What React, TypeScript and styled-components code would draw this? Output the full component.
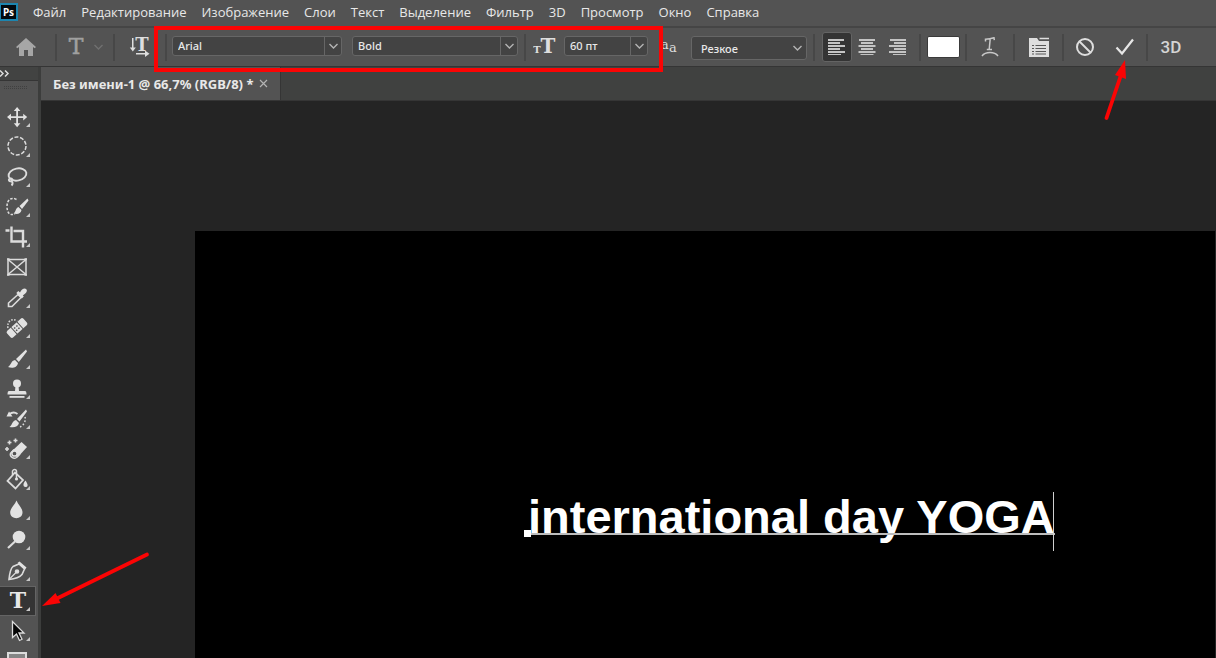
import React from "react";
import styled, { createGlobalStyle } from "styled-components";

const Global = createGlobalStyle`
  *, *::before, *::after { box-sizing: border-box; }
  body { margin: 0; background: #242424; color: #e8e8e8; font-family: "Noto Sans", "Open Sans", sans-serif; }
  button, input, select { font: inherit; color: inherit; }
  svg { display: block; flex: none; }
`;

const Page = styled.div`
  position: relative;
  display: flex;
  flex-direction: column;
  height: 100vh;
  overflow: hidden;
`;

const MenuBar = styled.nav`
  display: flex;
  align-items: center;
  gap: 15px;
  height: 26px;
  flex: none;
  padding-bottom: 2px;
  background: #535353;
`;

const AppLogo = styled.div`
  display: flex;
  align-items: center;
  justify-content: center;
  width: 18px;
  height: 18px;
  background: #020a10;
  border: 2px solid #1d86b0;
  border-left-width: 1px;
  font-size: 10px;
  font-weight: 700;
  line-height: 12px;
  color: #fff;
`;

const MenuItem = styled.button`
  padding: 0;
  border: 0;
  background: none;
  font-family: "Open Sans", "Noto Sans", sans-serif;
  font-size: 13px;
  line-height: 20px;
  white-space: nowrap;
`;

const OptionsBar = styled.div`
  display: flex;
  align-items: center;
  height: 41px;
  flex: none;
  background: #535353;
  border-top: 2px solid #454545;
  border-bottom: 1px solid #353535;
`;

const Cell = styled.div<{ $w: number }>`
  display: flex;
  align-items: center;
  justify-content: center;
  width: ${(p) => p.$w}px;
  flex: none;
`;

const Divider = styled.div`
  width: 2px;
  height: 27px;
  flex: none;
  background: #474747;
`;

const IconButton = styled.button<{ $w?: number; $active?: boolean }>`
  display: flex;
  align-items: center;
  justify-content: center;
  width: ${(p) => p.$w ?? 30}px;
  height: 30px;
  flex: none;
  padding: 0;
  border: 1px solid ${(p) => (p.$active ? "#646464" : "transparent")};
  border-radius: 3px;
  background: ${(p) => (p.$active ? "#343434" : "none")};
`;

const Combo = styled.div<{ $w: number }>`
  display: flex;
  width: ${(p) => p.$w}px;
  height: 20px;
  flex: none;
  margin-bottom: 2px;
  border: 1px solid #666;
  border-radius: 3px;
  background: #434343;
`;

const ComboInput = styled.input`
  flex: 1;
  min-width: 0;
  padding: 0 5px;
  border: 0;
  background: none;
  font-size: 11px;
  font-weight: 500;
  line-height: 18px;
`;

const ComboArrow = styled.button`
  display: flex;
  align-items: center;
  justify-content: center;
  width: 17px;
  padding: 0;
  border: 0;
  border-left: 1px solid #666;
  background: none;
`;

const SelectBox = styled.div`
  display: grid;
  align-items: center;
  width: 116px;
  height: 24px;
  flex: none;
  margin: 2px 6px 0 0;
  border: 1px solid #666;
  border-radius: 3px;
  background: #434343;
  & > * { grid-area: 1 / 1; }
  & > svg { justify-self: end; margin-right: 3px; pointer-events: none; }
`;

const Select = styled.select`
  width: 100%;
  height: 22px;
  padding: 0 20px 0 9px;
  appearance: none;
  border: 0;
  background: none;
  font-size: 11px;
  font-weight: 500;
`;

const Swatch = styled.button`
  width: 33px;
  height: 22px;
  flex: none;
  margin: 0 5px 0 6px;
  padding: 0;
  border: 1px solid #3a3a3a;
  border-radius: 2px;
  background: #fff;
`;

const Workspace = styled.div`
  display: flex;
  flex: 1;
  min-height: 0;
`;

const ToolPanel = styled.aside`
  width: 41px;
  flex: none;
  overflow: hidden;
  background: #535353;
  border-right: 3px solid #3c3d3c;
`;

const PanelHeader = styled.button`
  display: flex;
  align-items: center;
  width: 100%;
  height: 14px;
  padding: 0;
  border: 0;
  border-bottom: 1px solid #353535;
  background: #424342;
`;

const Grip = styled.div`
  width: 23px;
  height: 3px;
  margin: 5px 0 13px 4px;
  border-top: 1px dotted #404040;
  border-bottom: 1px dotted #404040;
`;

const ToolGroups = styled.div`
  display: flex;
  flex-direction: column;
  gap: 1px;
`;

const ToolGroup = styled.div`
  display: flex;
  flex-direction: column;
`;

const ToolButton = styled.button<{ $active: boolean }>`
  display: flex;
  align-items: center;
  width: 36px;
  height: 30px;
  padding: 0 0 0 5px;
  border: 1px solid ${(p) => (p.$active ? "#646464" : "transparent")};
  border-left: 0;
  background: ${(p) => (p.$active ? "#343434" : "none")};
`;

const Documents = styled.main`
  display: flex;
  flex-direction: column;
  flex: 1;
  min-width: 0;
`;

const TabStrip = styled.div`
  display: flex;
  height: 34px;
  flex: none;
  background: #404140;
  border-bottom: 1px solid #353535;
`;

const Tab = styled.div`
  display: flex;
  align-items: center;
  gap: 6px;
  padding: 0 12px;
  border-right: 1px solid #353535;
  background: #535353;
  font-size: 13px;
  font-weight: 700;
  white-space: nowrap;
`;

const CloseButton = styled.button`
  padding: 0;
  border: 0;
  background: none;
`;

const Stage = styled.div`
  display: flex;
  flex: 1;
  min-height: 0;
  padding: 130px 1px 0 154px;
  background: #242424;
`;

const Artboard = styled.div`
  flex: 1;
  padding: 261px 0 0 333px;
  background: #000;
`;

const TextLayer = styled.div`
  position: relative;
  width: max-content;
  color: #fff;
  font: 700 47px/50px "Liberation Sans", Arial, sans-serif;
  white-space: nowrap;
`;

const Baseline = styled.div`
  position: absolute;
  left: 0;
  right: 0;
  top: 41px;
  height: 2px;
  background: #bdbdbd;
`;

const Anchor = styled.div`
  position: absolute;
  left: -4px;
  top: 38px;
  width: 7px;
  height: 7px;
  background: #fff;
`;

const Caret = styled.div`
  position: absolute;
  right: 1px;
  top: 0;
  width: 1px;
  height: 59px;
  background: #d0d0d0;
`;

const Highlight = styled.div`
  position: absolute;
  left: 154px;
  top: 26px;
  width: 509px;
  height: 46px;
  border: 4px solid #fb0404;
  pointer-events: none;
`;

const Arrows = styled.svg`
  position: absolute;
  left: 0;
  top: 0;
  pointer-events: none;
`;

const Chevron = ({ color = "#b4b4b4" }: { color?: string }) => (
  <svg width="11" height="8" viewBox="0 0 11 8" fill="none" stroke={color} strokeWidth="1.4">
    <path d="M1.5 2l4 4 4-4" />
  </svg>
);

const slab = { fontFamily: "DejaVu Serif, serif" };

const HomeIcon = () => (
  <svg width="20" height="18" viewBox="0 0 20 18" fill="#a6a6a6">
    <path d="M10 0L20 9l-1.300 1.300-1.700-1.300v9h-5v-6H8v6H3V9l-1.700 1.300L0 9z" />
  </svg>
);

const TypePresetIcon = () => (
  <svg width="20" height="28" viewBox="0 0 20 28" fill="#a0a0a0" stroke="#a0a0a0" strokeWidth=".5">
    <text x="10" y="21" textAnchor="middle" fontSize="22" style={slab}>T</text>
  </svg>
);

const OrientationIcon = () => (
  <svg width="22" height="28" viewBox="0 0 22 28" fill="#dedede">
    <text x="13" y="18" textAnchor="middle" fontSize="18" fontWeight="700" style={slab}>T</text>
    <path d="M3 5h1.500v12H3z" />
    <path d="M.8 14.500h6l-3 4z" />
    <path d="M7 20h10v1.500H7z" />
    <path d="M16 17.500l4.500 3.200-4.500 3.200z" />
  </svg>
);

const FontSizeIcon = () => (
  <svg width="24" height="28" viewBox="0 0 24 28" fill="#dedede">
    <text x="4" y="20" textAnchor="middle" fontSize="10" fontWeight="700" style={slab}>T</text>
    <text x="15" y="20" textAnchor="middle" fontSize="20" fontWeight="700" style={slab}>T</text>
  </svg>
);

const AntiAliasIcon = () => (
  <svg width="17" height="24" viewBox="0 0 17 24" fill="#dedede">
    <text x="0" y="14" fontSize="13" style={slab}>a</text>
    <text x="8" y="17" fontSize="13" style={slab}>a</text>
  </svg>
);

type Align = "left" | "center" | "right";

const AlignIcon = ({ kind }: { kind: Align }) => (
  <svg width="18" height="18" viewBox="0 0 18 18" fill="#c4c4c4">
    {[16, 12, 17, 12, 17, 13].map((w, i) => (
      <rect
        key={i}
        x={kind === "left" ? 0 : kind === "center" ? (18 - w) / 2 : 18 - w}
        y={1 + i * 3}
        width={w}
        height={i === 5 ? 1 : 2}
      />
    ))}
  </svg>
);

const WarpIcon = () => (
  <svg width="18" height="20" viewBox="0 0 18 20" fill="none" stroke="#c8c8c8" strokeWidth="1.500">
    <path d="M4.500 4.500V2.200c3-.2 5.500-.6 8.500-1.400l.3 2.300M9.200 2l-1 10.300M5.800 12.500h5.200" />
    <path d="M1 19c3.500-4.600 12.500-4.600 16 0" />
  </svg>
);

const PanelIcon = () => (
  <svg width="20" height="20" viewBox="0 0 20 20">
    <path d="M0 1h8l2 3h10v16H0z" fill="#dedede" />
    <path d="M10.500 1.500H20" stroke="#dedede" strokeWidth="1.500" />
    <path d="M3 8.500h2M6.500 8.500H17M3 11.500h2M6.500 11.500H17M3 14.500h2M6.500 14.500H17M3 17h2M6.500 17H17" stroke="#575757" strokeWidth="1.200" />
  </svg>
);

const CancelIcon = () => (
  <svg width="20" height="20" viewBox="0 0 20 20" fill="none" stroke="#dedede" strokeWidth="2">
    <circle cx="10" cy="10" r="8" />
    <path d="M4.500 4.500l11 11" />
  </svg>
);

const CommitIcon = () => (
  <svg width="20" height="18" viewBox="0 0 20 18" fill="none" stroke="#e6e6e6" strokeWidth="2.200">
    <path d="M1.500 9.500l5.500 6L18 1.500" />
  </svg>
);

const ThreeD = styled.span`
  font: 500 17px/20px Roboto, sans-serif;
  color: #d4d4d4;
`;

const toolArt: Record<string, React.ReactNode> = {
  move: (
    <g fill="#e2e2e2" stroke="none">
      <path d="M11.200 5h1.800v14.500h-1.800zM5 11.200h14.500v1.800H5z" />
      <path d="M12.100 2l3.300 4h-6.600zM12.100 22.200l3.300-4h-6.600zM2 12.100l4-3.300v6.600zM22.200 12.100l-4-3.300v6.600z" />
    </g>
  ),
  marquee: <circle cx="12" cy="11" r="9" strokeDasharray="4 1.650" />,
  lasso: (
    <g strokeWidth="1.900">
      <ellipse cx="12.500" cy="9.500" rx="9" ry="6" transform="rotate(-12 12.500 9.500)" />
      <path d="M5 13.500c-2 1-1 3.500 1.500 2.500 2-.8.500-3-1.500-2.500M7 16.500c1 1.500 1 2.500-.5 4" />
    </g>
  ),
  quick: (
    <g>
      <path d="M11.500 4.500C6 1.500 2 5 2 11.500S5 21 10 19" strokeDasharray="2.500 1.500" />
      <path d="M22.500 3.500L14.500 11l2.500 3 6.500-8.500z" fill="#e2e2e2" stroke="none" />
      <path d="M13.500 12l3 3c-.5 4-4.500 4.500-8 3.500 2.500-1.500 2-5.500 5-6.500z" fill="#e2e2e2" stroke="none" />
    </g>
  ),
  crop: <path d="M6.500 1.500v15H22M.5 5.500h4M8.500 6H18v16.500" strokeWidth="2.400" />,
  frame: (
    <g strokeWidth="1.500">
      <rect x="3" y="4.500" width="18" height="15" />
      <path d="M3 4.500l18 15M21 4.500l-18 15" />
      <path d="M2 4h2.500M19.500 4H22M2 20h2.500M19.500 20H22" />
    </g>
  ),
  eyedropper: (
    <g>
      <path d="M13 8.500l3 3L7 20.500H3.500V17z" strokeWidth="1.600" />
      <path d="M15 6.500c1.500-3 4.500-5 6.300-3.200S20.500 8 17.800 9.500l1 1-2 2-5.500-5.500 2-2z" fill="#e2e2e2" stroke="none" />
    </g>
  ),
  heal: (
    <g>
      <path d="M3 12C1.500 5 8 1.500 12 5" strokeDasharray="1.600 1.400" />
      <g transform="rotate(-42 12 12)">
        <rect x="1" y="7.500" width="22" height="9" rx="2" fill="#e2e2e2" stroke="none" />
        <path d="M8 7v10M16 7v10" stroke="#535353" strokeWidth="1" />
        <path d="M9.500 10.500h5M9.500 13.500h5" stroke="#535353" strokeDasharray="1.500 1.500" />
      </g>
    </g>
  ),
  brush: (
    <g fill="#e2e2e2" stroke="none">
      <path d="M21 2.500L11 12l2.800 3L22 4.500z" />
      <path d="M10 13l3 3c-1 5-6 5.500-10 4 3-1.500 3-6.500 7-7z" />
    </g>
  ),
  stamp: (
    <g fill="#e2e2e2" stroke="none">
      <circle cx="12" cy="6.500" r="4" />
      <path d="M10.500 9h3l.5 5h6c1 0 1.500 1 1.500 3.500h-19C2.500 15 3 14 4 14h6z" />
      <path d="M4.500 19h15v1.800h-15z" />
    </g>
  ),
  history: (
    <g>
      <path d="M4 7.500c3-2.500 6-2.500 8.500-.5" strokeWidth="1.800" />
      <path d="M1.500 9.500l2.500-5 3.500 5z" fill="#e2e2e2" stroke="none" />
      <path d="M21 2.500L12 12l2.500 2.500L22 4.500z" fill="#e2e2e2" stroke="none" />
      <path d="M11 13l3 3c-1 4-5 5-9.500 4 2.500-1.500 2.500-6 6.500-7z" fill="#e2e2e2" stroke="none" />
      <path d="M20 10c1 4-1 8-5 10" strokeDasharray="1.500 2" />
    </g>
  ),
  eraser: (
    <g>
      <path d="M16.500 5l5.500 5-9.500 10.500-6.500-5.500z" fill="#e2e2e2" stroke="none" />
      <path d="M9 12.500L5.500 16.500c-1 3 3 6 6 4l3.500-3.500" strokeWidth="1.500" />
      <circle cx="9.500" cy="16.500" r="2.600" fill="#535353" stroke="#e2e2e2" />
      <path d="M4.500 3.500v4M2.500 5.500h4M10.500 1.500v4M8.500 3.500h4M2 10v4M0 12h4" strokeWidth="1.600" />
    </g>
  ),
  bucket: (
    <g>
      <path d="M10 4.500L2.500 13l8 7.500L18 12z" strokeWidth="1.800" />
      <path d="M7.500 7V3c1-2 3.500-2 4 0v7" strokeWidth="1.500" />
      <circle cx="11.500" cy="11" r="1.600" fill="#e2e2e2" stroke="none" />
      <path d="M20.500 12.500c3 4.500 2.500 6.500 0 6.500s-3-3 0-6.500z" fill="#e2e2e2" stroke="none" />
    </g>
  ),
  blur: <path d="M11.500 2.500c2 5 6 7.500 6 12 0 7.500-12.300 7.500-12.300 0 0-4.500 4.300-7 6.300-12z" fill="#e2e2e2" stroke="none" />,
  dodge: (
    <g>
      <circle cx="14" cy="9" r="6.300" fill="#e2e2e2" stroke="none" />
      <path d="M10.500 13L3 20" strokeWidth="2.200" />
    </g>
  ),
  pen: (
    <g strokeWidth="1.600">
      <path d="M4 20.500c.5-5 1.500-11 4-13l6-2.500 5.500 5-2.500 5.500c-2.500 3-8 4.500-13 5z" />
      <path d="M4 20.500l7.500-7.500" strokeWidth="1.200" />
      <circle cx="12" cy="12.500" r="1.500" fill="#e2e2e2" />
      <path d="M14.500 2.500l7 6-1.500 2-7.500-6.500z" fill="#e2e2e2" stroke="none" />
    </g>
  ),
  type: <text x="13" y="19" textAnchor="middle" fontSize="22" fontWeight="700" fill="#e8e8e8" stroke="none" style={slab}>T</text>,
  path: <path d="M7.500 2.500v16l4-3.500 3 6.500 2.500-1.200-3-6.300h5z" fill="#050505" strokeWidth="1.300" />,
  shape: <rect x="3" y="4" width="18" height="14" fill="#858585" strokeWidth="2" />,
};

const ToolIcon = ({ name }: { name: string }) => (
  <svg width="28" height="28" viewBox="0 0 28 28" fill="none" stroke="#dcdcdc" strokeWidth="1.500">
    <g transform="translate(0 2)">{toolArt[name]}</g>
    {name !== "frame" && <path d="M25 20v4h-4z" fill="#c8c8c8" stroke="none" />}
  </svg>
);

const menus = ["Файл", "Редактирование", "Изображение", "Слои", "Текст", "Выделение", "Фильтр", "3D", "Просмотр", "Окно", "Справка"];

const toolGroups = [
  ["move", "marquee", "lasso", "quick", "crop", "frame"],
  ["eyedropper", "heal"],
  ["brush", "stamp", "history", "eraser"],
  ["bucket", "blur", "dodge"],
  ["pen", "type", "path", "shape"],
];

const ComboBox = ({ label, value, width }: { label: string; value: string; width: number }) => (
  <Combo $w={width}>
    <ComboInput aria-label={label} defaultValue={value} />
    <ComboArrow aria-label={`${label}: список`}><Chevron /></ComboArrow>
  </Combo>
);

export default function App() {
  const [tool, setTool] = React.useState("type");
  const [align, setAlign] = React.useState<Align>("left");

  return (
    <Page>
      <Global />
      <MenuBar>
        <AppLogo>Ps</AppLogo>
        {menus.map((m) => <MenuItem key={m}>{m}</MenuItem>)}
      </MenuBar>

      <OptionsBar>
        <Cell $w={52}><IconButton aria-label="Главная"><HomeIcon /></IconButton></Cell>
        <Cell $w={3} />
        <Divider />
        <Cell $w={56}>
          <IconButton aria-label="Набор параметров" $w={46}><TypePresetIcon /><Cell $w={7} /><Chevron color="#707070" /></IconButton>
        </Cell>
        <Divider />
        <Cell $w={50}><IconButton aria-label="Ориентация текста"><OrientationIcon /></IconButton></Cell>
        <Divider />
        <Cell $w={5} />
        <ComboBox label="Шрифт" value="Arial" width={170} />
        <Cell $w={10} />
        <ComboBox label="Начертание" value="Bold" width={166} />
        <Cell $w={6} />
        <Divider />
        <Cell $w={38}><FontSizeIcon /></Cell>
        <ComboBox label="Размер" value="60 пт" width={84} />
        <Cell $w={43}><AntiAliasIcon /></Cell>
        <SelectBox>
          <Select aria-label="Сглаживание"><option>Резкое</option></Select>
          <Chevron />
        </SelectBox>
        <Divider />
        <Cell $w={104}>
          {(["left", "center", "right"] as Align[]).map((a) => (
            <IconButton key={a} aria-label={a} aria-pressed={a === align} $active={a === align} onClick={() => setAlign(a)}>
              <AlignIcon kind={a} />
            </IconButton>
          ))}
        </Cell>
        <Divider />
        <Swatch aria-label="Цвет текста" />
        <Divider />
        <Cell $w={46}><IconButton aria-label="Деформация"><WarpIcon /></IconButton></Cell>
        <Divider />
        <Cell $w={47}><IconButton aria-label="Панели"><PanelIcon /></IconButton></Cell>
        <Divider />
        <Cell $w={82}>
          <IconButton aria-label="Отменить" $w={40}><CancelIcon /></IconButton>
          <IconButton aria-label="Применить" $w={40}><CommitIcon /></IconButton>
        </Cell>
        <Divider />
        <Cell $w={46}><IconButton><ThreeD>3D</ThreeD></IconButton></Cell>
      </OptionsBar>

      <Workspace>
        <ToolPanel>
          <PanelHeader aria-label="Развернуть панель">
            <svg width="10" height="7" viewBox="0 0 10 7" fill="none" stroke="#dcdcdc" strokeWidth="1.500">
              <path d="M0 .5l3 3-3 3M5 .5l3 3-3 3" />
            </svg>
          </PanelHeader>
          <Grip />
          <ToolGroups>
            {toolGroups.map((g) => (
              <ToolGroup key={g[0]}>
                {g.map((t) => (
                  <ToolButton key={t} aria-label={t} aria-pressed={t === tool} $active={t === tool} onClick={() => setTool(t)}>
                    <ToolIcon name={t} />
                  </ToolButton>
                ))}
              </ToolGroup>
            ))}
          </ToolGroups>
        </ToolPanel>

        <Documents>
          <TabStrip>
            <Tab>
              Без имени-1 @ 66,7% (RGB/8) *
              <CloseButton aria-label="Закрыть">
                <svg width="9" height="9" viewBox="0 0 9 9" stroke="#b4b4b4" strokeWidth="1.200">
                  <path d="M1 1l7 7M8 1l-7 7" />
                </svg>
              </CloseButton>
            </Tab>
          </TabStrip>
          <Stage>
            <Artboard>
              <TextLayer>
                international day YOGA
                <Baseline />
                <Anchor />
                <Caret />
              </TextLayer>
            </Artboard>
          </Stage>
        </Documents>
      </Workspace>

      <Highlight />
      <Arrows width="1216" height="658" viewBox="0 0 1216 658" fill="#fb0404" stroke="#fb0404" strokeLinecap="round">
        <path d="M147 554.500L58 598" strokeWidth="3.800" />
        <path d="M42 606l13.500-13 5 10z" stroke="none" />
        <path d="M1106.500 118L1121 75" strokeWidth="3.800" />
        <path d="M1125 60l1 19-11-4z" stroke="none" />
      </Arrows>
    </Page>
  );
}
